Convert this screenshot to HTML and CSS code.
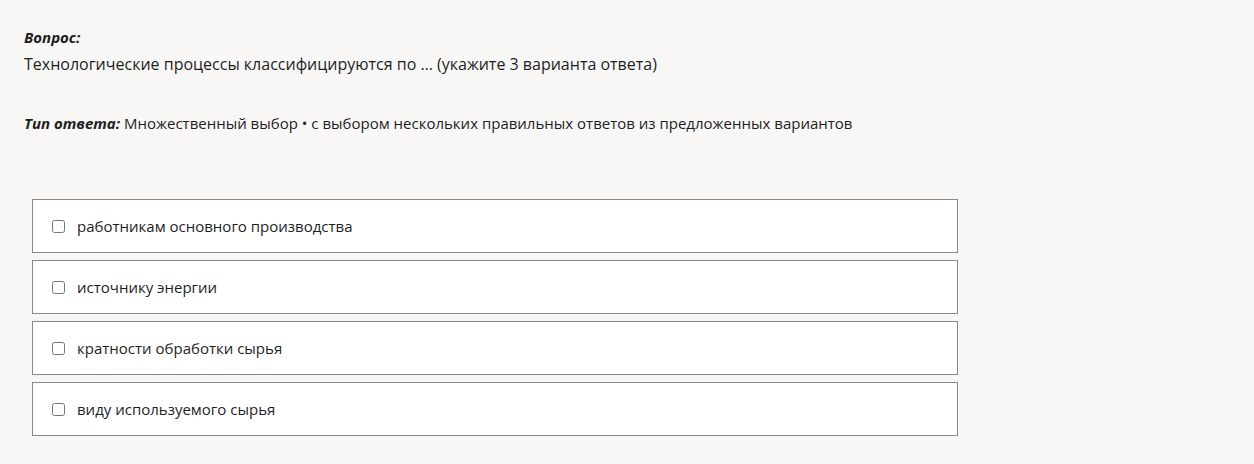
FILE: index.html
```html
<!DOCTYPE html>
<html lang="ru">
<head>
  <meta charset="UTF-8">
  <meta name="viewport" content="width=device-width, initial-scale=1.0">
  <title>Вопрос</title>
  <link rel="stylesheet" href="styles.css">
</head>
<body>
  <div class="question">
    <div class="label">Вопрос:</div>
    <p class="question-text">Технологические процессы классифицируются по … (укажите 3 варианта ответа)</p>
    <p class="answer-type"><span class="label">Тип ответа:</span> Множественный выбор • с выбором нескольких правильных ответов из предложенных вариантов</p>
  </div>

  <div class="options">
    <label class="option">
      <input type="checkbox">
      <span>работникам основного производства</span>
    </label>
    <label class="option">
      <input type="checkbox">
      <span>источнику энергии</span>
    </label>
    <label class="option">
      <input type="checkbox">
      <span>кратности обработки сырья</span>
    </label>
    <label class="option">
      <input type="checkbox">
      <span>виду используемого сырья</span>
    </label>
  </div>
</body>
</html>
```

FILE: styles.css
```css
body {
  margin: 0;
  padding: 26px 24px;
  background-color: #f8f7f6;
  color: #1e1e1e;
  font-family: "Open Sans", "Noto Sans", Arial, sans-serif;
}

.label {
  font-weight: bold;
  font-style: italic;
  font-size: 15px;
  line-height: 22px;
}

.question-text {
  margin: 4px 0 0;
  font-size: 16px;
  line-height: 24px;
}

.answer-type {
  margin: 36px 0 0;
  font-size: 15px;
  line-height: 22px;
}

.options {
  margin-top: 65px;
  margin-left: 8px;
  width: 926px;
  display: flex;
  flex-direction: column;
  gap: 7px;
}

.option {
  display: flex;
  align-items: center;
  height: 52px;
  padding: 0 19px;
  background: #ffffff;
  border: 1px solid #8a8a8a;
  font-size: 15px;
  cursor: pointer;
}

.option input {
  width: 13px;
  height: 13px;
  margin: 0 12px 0 0;
}
```
